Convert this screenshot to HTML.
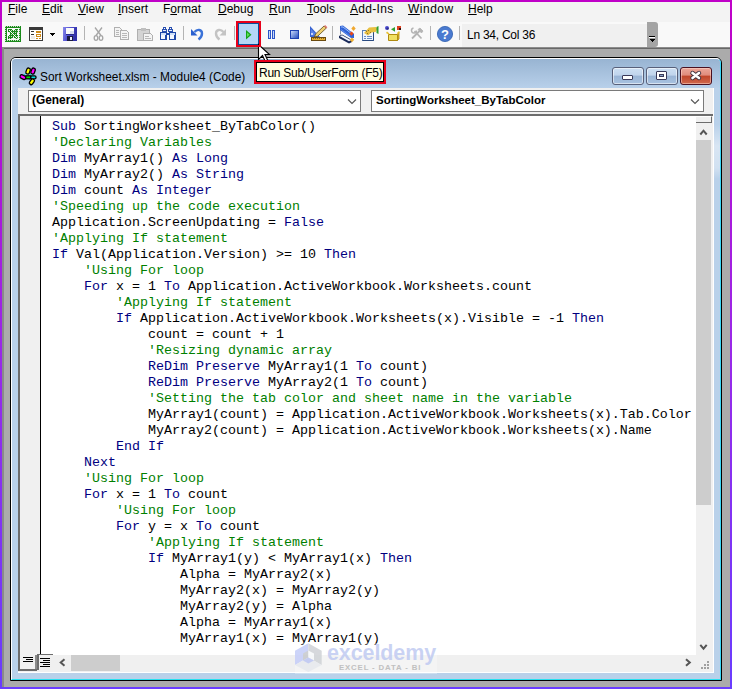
<!DOCTYPE html>
<html><head><meta charset="utf-8">
<style>
*{margin:0;padding:0;box-sizing:border-box}
html,body{width:732px;height:689px;overflow:hidden}
body{position:relative;background:#ababab;font-family:"Liberation Sans",sans-serif;}
.a{position:absolute}
#bord{left:0;top:0;width:732px;height:689px;border:2px solid transparent;border-image:linear-gradient(#c000c8,#9a28e8 50%,#6a3cff) 1;z-index:50}
#menu{left:2px;top:2px;width:728px;height:20px;background:#f3f3f3}
#tool{left:2px;top:22px;width:728px;height:25px;background:#f9f9f9}
.mi{position:absolute;top:2px;font-size:12px;color:#000;white-space:nowrap;line-height:14px}
.mi u{text-decoration:underline;text-underline-offset:1px}
#code{font-family:"Liberation Mono",monospace;font-size:13.333px;line-height:16px;color:#000;white-space:pre}
.k{color:#00007f}.c{color:#008000}
</style></head><body>
<div id="bord" class="a"></div>
<!-- menu -->
<div id="menu" class="a"></div>
<div class="mi" style="left:8px"><u>F</u>ile</div>
<div class="mi" style="left:42px"><u>E</u>dit</div>
<div class="mi" style="left:78px"><u>V</u>iew</div>
<div class="mi" style="left:118px"><u>I</u>nsert</div>
<div class="mi" style="left:163px">F<u>o</u>rmat</div>
<div class="mi" style="left:218px"><u>D</u>ebug</div>
<div class="mi" style="left:269px"><u>R</u>un</div>
<div class="mi" style="left:307px"><u>T</u>ools</div>
<div class="mi" style="left:350px;letter-spacing:0.3px"><u>A</u>dd-Ins</div>
<div class="mi" style="left:408px;letter-spacing:0.5px"><u>W</u>indow</div>
<div class="mi" style="left:468px"><u>H</u>elp</div>
<!-- toolbar -->
<div id="tool" class="a"></div>
<div class="a" style="left:2px;top:47px;width:728px;height:1px;background:#8c8c8c"></div>
<div class="a" style="left:2px;top:48px;width:728px;height:1px;background:#686868"></div>
<div class="a" style="left:2px;top:47px;width:2px;height:640px;background:#8a8a8a"></div>
<!-- window frame -->
<div class="a" style="left:10px;top:57px;width:712px;height:624px;background:#b9d1ea;border:1px solid #000;border-radius:6px 6px 0 0"></div>
<div class="a" style="left:11px;top:58px;width:710px;height:622px;border-left:1px solid #fff;border-top:1px solid #fff;border-right:1px solid #3ad8f8;border-bottom:1px solid #28e0f0;border-radius:5px 5px 0 0"></div>
<div class="a" style="left:12px;top:59px;width:708px;height:29px;background:linear-gradient(#98b4d2,#b8d0ea);border-radius:4px 4px 0 0"></div>
<div class="a" style="left:714px;top:124px;width:6px;height:55px;background:linear-gradient(rgba(255,255,255,0),rgba(255,255,255,.45) 40%,rgba(255,255,255,.35) 80%,rgba(255,255,255,0))"></div>
<!-- client -->
<div class="a" style="left:18px;top:88px;width:696px;height:585px;background:#f0f0f0;border-right:1px solid #fff;border-bottom:1px solid #fff"></div>
<div class="a" style="left:28px;top:90px;width:333px;height:22px;background:#fff;border:1px solid #7a7a7a"></div>
<div class="a" style="left:371px;top:90px;width:333px;height:22px;background:#fff;border:1px solid #7a7a7a"></div>
<div class="a" style="left:18px;top:114px;width:695px;height:2px;background:#6d6d6d"></div>
<div class="a" style="left:18px;top:114px;width:2px;height:557px;background:#6d6d6d"></div>
<div class="a" style="left:40px;top:116px;width:1px;height:539px;background:#000"></div>
<div class="a" style="left:41px;top:116px;width:655px;height:539px;background:#fff;overflow:hidden">
<pre id="code" class="a" style="left:11px;top:3px">
<span class="k">Sub</span> SortingWorksheet_ByTabColor()
<span class="c">'Declaring Variables</span>
<span class="k">Dim</span> MyArray1() <span class="k">As Long</span>
<span class="k">Dim</span> MyArray2() <span class="k">As String</span>
<span class="k">Dim</span> count <span class="k">As Integer</span>
<span class="c">'Speeding up the code execution</span>
Application.ScreenUpdating = <span class="k">False</span>
<span class="c">'Applying If statement</span>
<span class="k">If</span> Val(Application.Version) &gt;= 10 <span class="k">Then</span>
    <span class="c">'Using For loop</span>
    <span class="k">For</span> x = 1 <span class="k">To</span> Application.ActiveWorkbook.Worksheets.count
        <span class="c">'Applying If statement</span>
        <span class="k">If</span> Application.ActiveWorkbook.Worksheets(x).Visible = -1 <span class="k">Then</span>
            count = count + 1
            <span class="c">'Resizing dynamic array</span>
            <span class="k">ReDim Preserve</span> MyArray1(1 <span class="k">To</span> count)
            <span class="k">ReDim Preserve</span> MyArray2(1 <span class="k">To</span> count)
            <span class="c">'Setting the tab color and sheet name in the variable</span>
            MyArray1(count) = Application.ActiveWorkbook.Worksheets(x).Tab.Color
            MyArray2(count) = Application.ActiveWorkbook.Worksheets(x).Name
        <span class="k">End If</span>
    <span class="k">Next</span>
    <span class="c">'Using For loop</span>
    <span class="k">For</span> x = 1 <span class="k">To</span> count
        <span class="c">'Using For loop</span>
        <span class="k">For</span> y = x <span class="k">To</span> count
            <span class="c">'Applying If statement</span>
            <span class="k">If</span> MyArray1(y) &lt; MyArray1(x) <span class="k">Then</span>
                Alpha = MyArray2(x)
                MyArray2(x) = MyArray2(y)
                MyArray2(y) = Alpha
                Alpha = MyArray1(x)
                MyArray1(x) = MyArray1(y)
</pre>
</div>
<!-- vscroll -->
<div class="a" style="left:696px;top:116px;width:16px;height:7px;background:#f0f0f0;border-right:1px solid #6d6d6d;border-bottom:1px solid #6d6d6d;border-top:1px solid #fff"></div>
<div class="a" style="left:696px;top:140px;width:15px;height:365px;background:#cdcdcd"></div>
<!-- hscroll -->
<div class="a" style="left:71px;top:655px;width:49px;height:16px;background:#cdcdcd"></div>
<!-- status box -->
<div class="a" style="left:462px;top:24px;width:185px;height:23px;background:#f0f0f0;border-radius:0 0 3px 0"></div>
<div class="a" style="left:467px;top:28px;font-size:12px;letter-spacing:-0.25px;line-height:14px;color:#000;white-space:nowrap">Ln 34, Col 36</div>
<div class="a" style="left:647px;top:22px;width:11px;height:25px;background:#a4a4a4;border-radius:0 3px 3px 0"></div>
<svg class="a" style="left:0;top:0" width="732" height="689" viewBox="0 0 732 689">
 <defs>
  <pattern id="chk" width="2" height="2" patternUnits="userSpaceOnUse"><rect width="2" height="2" fill="#1a8a1a"/><rect x="1" y="0" width="1" height="1" fill="#c8e0c8"/></pattern>
 </defs>
 <!-- grip glyph -->
 <g shape-rendering="crispEdges" fill="#000">
  <rect x="649" y="36" width="6" height="1"/>
  <path d="M649 39h6l-3 3z"/>
 </g>
 <g fill="#fff" shape-rendering="crispEdges"><rect x="649" y="37" width="6" height="1"/></g>
 <!-- excel icon -->
 <g shape-rendering="crispEdges">
  <rect x="5" y="26" width="16" height="16" fill="url(#chk)"/>
  <rect x="7" y="28" width="12" height="12" fill="#f9f9f9"/>
  <path d="M8 29h3l7 7v3h-3l-7-7z" fill="url(#chk)"/>
  <path d="M15 29h3v3l-7 7h-3v-3z" fill="url(#chk)"/>
  <path d="M9 30l8 8" stroke="#fff" stroke-width="1" fill="none"/>
 </g>
 <!-- userform icon -->
 <g shape-rendering="crispEdges">
  <rect x="29" y="27" width="14" height="14" fill="#3a3a3a"/>
  <rect x="30" y="30" width="12" height="10" fill="#fff"/>
  <rect x="31" y="31" width="3" height="1" fill="#333"/>
  <rect x="31" y="34" width="3" height="1" fill="#333"/>
  <rect x="31" y="36" width="4" height="3" fill="#ececec"/>
  <rect x="36" y="31" width="5" height="2" fill="#d08a18"/>
  <rect x="36" y="34" width="5" height="3" fill="#d08a18"/>
  <rect x="37" y="35" width="3" height="1" fill="#fff"/>
  <rect x="36" y="38" width="2" height="1" fill="#d08a18"/>
  <rect x="39" y="38" width="2" height="1" fill="#d08a18"/>
  <path d="M49.5 33h6l-3 3.2z" fill="#000"/>
 </g>
 <!-- save -->
 <defs><linearGradient id="savg" x1="0" y1="0" x2="1" y2="0.3"><stop offset="0" stop-color="#8a8aec"/><stop offset="0.5" stop-color="#5050d0"/><stop offset="1" stop-color="#3030a8"/></linearGradient></defs>
 <g shape-rendering="crispEdges">
  <rect x="63" y="27" width="14" height="14" fill="url(#savg)"/>
  <rect x="66" y="28" width="8" height="6" fill="#fafafa"/>
  <rect x="70" y="31" width="4" height="3" fill="#d8dcf0"/>
  <rect x="66" y="34" width="8" height="1" fill="#2a2a90"/>
  <rect x="67" y="36" width="6" height="5" fill="#1a1a40"/>
  <rect x="70" y="37" width="2" height="3" fill="#e8ecff"/>
 </g>
 <!-- separators -->
 <g fill="#b4b4b4" shape-rendering="crispEdges">
  <rect x="84" y="26" width="1" height="14"/>
  <rect x="183" y="26" width="1" height="14"/>
  <rect x="234" y="26" width="1" height="14"/>
  <rect x="332" y="26" width="1" height="14"/>
  <rect x="430" y="26" width="1" height="14"/>
  <rect x="459" y="26" width="1" height="14"/>
 </g>
 <!-- scissors -->
 <g fill="none" stroke="#a6a6a6" stroke-width="1.3">
  <path d="M95 27.5l6 8M102 27.5l-6 8"/>
  <ellipse cx="96" cy="38" rx="1.8" ry="2.3"/>
  <ellipse cx="101" cy="38" rx="1.8" ry="2.3"/>
 </g>
 <!-- copy -->
 <g shape-rendering="crispEdges">
  <path d="M114.5 27.5h5l2 2v7h-7z" fill="#f4f4f4" stroke="#b0b0b0"/>
  <path d="M120.5 30.5h6l2 2v7h-8z" fill="#f4f4f4" stroke="#b0b0b0"/>
  <g fill="#b8b8b8"><rect x="116" y="30" width="3" height="1"/><rect x="116" y="32" width="3" height="1"/><rect x="116" y="34" width="3" height="1"/>
  <rect x="122" y="33" width="5" height="1"/><rect x="122" y="35" width="5" height="1"/><rect x="122" y="37" width="5" height="1"/></g>
 </g>
 <!-- paste -->
 <g shape-rendering="crispEdges">
  <rect x="137.5" y="29.5" width="12" height="11" fill="#d4d4d4" stroke="#b0b0b0"/>
  <rect x="141" y="28" width="5" height="3" fill="#c0c0c0"/>
  <path d="M143.5 33.5h7l2 2v5h-9z" fill="#f4f4f4" stroke="#b0b0b0"/>
  <g fill="#b8b8b8"><rect x="145" y="36" width="4" height="1"/><rect x="145" y="38" width="6" height="1"/></g>
 </g>
 <!-- binoculars -->
 <g shape-rendering="crispEdges">
  <rect x="163" y="27" width="3" height="3" fill="#2a50b0"/><rect x="164" y="28" width="1" height="1" fill="#fff"/>
  <rect x="162" y="29" width="5" height="3" fill="#2a50b0"/><rect x="163" y="30" width="3" height="1" fill="#e8f0fc"/>
  <rect x="160" y="32" width="7" height="8" fill="#1e48a8"/><rect x="161" y="33" width="5" height="2" fill="#d0e0f8"/><rect x="161" y="35" width="4" height="4" fill="#f4f8ff"/>
  <rect x="169" y="27" width="3" height="3" fill="#2a50b0"/><rect x="170" y="28" width="1" height="1" fill="#fff"/>
  <rect x="168" y="29" width="5" height="3" fill="#2a50b0"/><rect x="169" y="30" width="3" height="1" fill="#e8f0fc"/>
  <rect x="169" y="32" width="7" height="8" fill="#1e48a8"/><rect x="170" y="33" width="5" height="2" fill="#d0e0f8"/><rect x="170" y="35" width="4" height="4" fill="#f4f8ff"/>
  <rect x="167" y="33" width="2" height="2" fill="#1e48a8"/>
 </g>
 <!-- undo / redo -->
 <g fill="none" stroke-width="2.4" stroke-linecap="butt">
  <path d="M194.5 32c2.5-3 7.5-3 7.5 1.5c0 2.5-1.5 4.5-3.5 6" stroke="#3a72d8"/>
  <path d="M223.5 32c-2.5-3-7.5-3-7.5 1.5c0 2.5 1.5 4.5 3.5 6" stroke="#c4c4c4"/>
 </g>
 <path d="M191 29v6.5h6.5z" fill="#2a60d0"/>
 <path d="M226 29v6.5h-6.5z" fill="#c4c4c4"/>
 <!-- run button -->
 <g shape-rendering="crispEdges">
  <rect x="236" y="21" width="25" height="26" fill="#e8001a"/>
  <rect x="238" y="23" width="21" height="22" fill="#0a4e9a"/>
  <rect x="239" y="24" width="19" height="20" fill="#b4d6f6"/>
 </g>
 <path d="M246 30v9.5l5.5-4.75z" fill="#17a317"/>
 <path d="M247 32.5v4.5l2.6-2.25z" fill="#5ce05c"/>
 <!-- pause -->
 <defs>
  <linearGradient id="stopg" x1="0" y1="0" x2="1" y2="1"><stop offset="0" stop-color="#c8d8f8"/><stop offset="1" stop-color="#2a50c0"/></linearGradient>
 </defs>
 <g shape-rendering="crispEdges">
  <rect x="268" y="30" width="3" height="9" fill="#2b55c8"/><rect x="269" y="31" width="1" height="7" fill="#c8d8f8"/>
  <rect x="272" y="30" width="3" height="9" fill="#2b55c8"/><rect x="273" y="31" width="1" height="7" fill="#c8d8f8"/>
  <rect x="290" y="30" width="9" height="9" fill="#1e40b0"/><rect x="291" y="31" width="7" height="7" fill="url(#stopg)"/>
 </g>
 <!-- design mode -->
 <path d="M310 26v11h10z" fill="#3a64d0"/>
 <path d="M311 29v6.5h6z" fill="#5a84e8"/>
 <circle cx="312" cy="34" r="0.9" fill="#fff"/>
 <path d="M314.5 37l1-3l8.5-8l2.2 2.2l-8.5 8z" fill="#f0d070" stroke="#5a4a20" stroke-width="0.8"/>
 <path d="M324 26l1.2-1l2.2 2.2l-1 1.2z" fill="#e07a70"/>
 <g shape-rendering="crispEdges"><rect x="311" y="37" width="15" height="4" fill="#6a4a10"/><rect x="312" y="38" width="13" height="2" fill="#e8b030"/>
 <rect x="313" y="38" width="1" height="1" fill="#8a6a20"/><rect x="315" y="38" width="1" height="1" fill="#8a6a20"/><rect x="317" y="38" width="1" height="1" fill="#8a6a20"/><rect x="319" y="38" width="1" height="1" fill="#8a6a20"/><rect x="321" y="38" width="1" height="1" fill="#8a6a20"/><rect x="323" y="38" width="1" height="1" fill="#8a6a20"/></g>
 <!-- project explorer -->
 <g>
  <path d="M339 36l3-1.5l10 5.5v2l-3 1.5l-10-5.5z" fill="#1a2a5a"/>
  <path d="M340 36.2l2-1l9 5l-2 1z" fill="#f4f8ff"/>
  <path d="M340.5 27.5v7" stroke="#8090a8" stroke-width="1"/>
  <path d="M340 26l3-0.5l11 8.5v4l-3 0l-11-8z" fill="#2f62d8"/>
  <path d="M341 27l2 0l9 7" stroke="#a8c8f8" stroke-width="0.9" fill="none"/>
  <path d="M341 29.5l9 6.5" stroke="#6a98f0" stroke-width="0.8" fill="none"/>
  <path d="M353.5 26l2.2 2.5l-2.2 2.6l-2.2-2.6z" fill="#f0a830"/>
  <path d="M351.5 31.5l2.2 2l-2.2 2.2l-2.2-2.2z" fill="#e84818"/>
  <path d="M352 37.5l2.2 2.3l-2.2 2.4l-2.2-2.4z" fill="#f0b030"/>
 </g>
 <!-- properties -->
 <g>
  <rect x="362.5" y="30.5" width="11" height="10" fill="#f0f6fe" stroke="#5a80b8"/>
  <path d="M373.5 31v9.5h-11" stroke="#2a4a80" fill="none"/>
  <g fill="#6a8cc0" shape-rendering="crispEdges"><rect x="364" y="36" width="2" height="1"/><rect x="367" y="36" width="5" height="1"/><rect x="364" y="38" width="2" height="1"/><rect x="367" y="38" width="5" height="1"/></g>
  <path d="M364 33l5-5.5l7-0.5l1.5 2l-2 3l-4 0.5l-3.5 3z" fill="#e8c040"/>
  <path d="M366 31l1 1M368 30l1 1M370 32l1 1M367 33l1 1" stroke="#7a6020" stroke-width="0.8"/>
  <path d="M376.5 27l2-1v8l-2-1z" fill="#30a030"/>
 </g>
 <!-- object browser -->
 <g>
  <circle cx="387" cy="28" r="2" fill="#4a4ad0"/>
  <circle cx="387.6" cy="28.6" r="1.2" fill="#101040" opacity=".5"/>
  <path d="M391 29.3l4-2.4v4.8z" fill="#30a030"/>
  <rect x="397" y="26" width="4" height="4" fill="#e04020"/>
  <rect x="399" y="28" width="2" height="2" fill="#301010"/>
  <path d="M388.5 34.5h9v6h-9z" fill="#f0e060" stroke="#b08a10" stroke-width="1"/>
  <path d="M397.5 34.5l1.5-1.5v6l-1.5 1.5z" fill="#d8b020" stroke="#b08a10" stroke-width="0.8"/>
  <path d="M388.5 34.5l-2.5-1.5l1-1.5l2.5 2z" fill="#e8c030"/>
  <path d="M397.5 34.5l2.5-2l-1-1.5l-2 2z" fill="#e8c030"/>
 </g>
 <!-- tools -->
 <g fill="none" stroke="#b4b4b4" stroke-width="1.8">
  <path d="M412 38.5l8-8M414.5 31l7 7.5"/>
  <path d="M416.5 30.5a2.5 2.5 0 1 1 -3 -2.5" stroke-width="1.5"/>
  <path d="M418 29.5l2-1.5l3 3l-1.5 2z" fill="#b4b4b4" stroke-width="0.8"/>
 </g>
 <!-- help -->
 <circle cx="445" cy="34" r="7.6" fill="#4a7ad0" stroke="#2f5fb0" stroke-width="0.8"/>
 <text x="445" y="38.5" text-anchor="middle" font-family="Liberation Sans" font-weight="bold" font-size="13" fill="#fff">?</text>
</svg>

<!-- title -->
<svg class="a" style="left:0;top:0" width="732" height="689" viewBox="0 0 732 689">
 <g fill="#00e0e0" shape-rendering="crispEdges">
  <rect x="23" y="75" width="1" height="1"/><rect x="24" y="74" width="1" height="1"/><rect x="25" y="73" width="1" height="1"/><rect x="26" y="72" width="1" height="1"/>
  <rect x="29" y="73" width="1" height="1"/><rect x="30" y="74" width="1" height="1"/><rect x="31" y="75" width="1" height="1"/><rect x="32" y="74" width="1" height="1"/><rect x="33" y="73" width="1" height="1"/>
  <rect x="29" y="79" width="1" height="1"/><rect x="30" y="80" width="1" height="1"/><rect x="28" y="78" width="1" height="1"/>
 </g>
 <g stroke="#000" stroke-width="1.3">
  <rect x="26.3" y="68" width="3.6" height="6" rx="1.6" fill="#ffff00" transform="rotate(20 28 71)"/>
  <rect x="31.3" y="68" width="3.6" height="6" rx="1.6" fill="#ff00ff" transform="rotate(20 33 71)"/>
  <rect x="20" y="75.3" width="6" height="3.6" rx="1.6" fill="#ff00ff" transform="rotate(25 23 77)"/>
  <rect x="25.8" y="75.8" width="5" height="3" fill="#00e000"/>
  <rect x="30.8" y="75.8" width="5.2" height="3" rx="1.2" fill="#00e0e0"/>
  <rect x="30.3" y="78.8" width="3.6" height="6" rx="1.6" fill="#ffff00" transform="rotate(35 32 81.5)"/>
 </g>
</svg>
<div class="a" style="left:40px;top:70px;font-size:11.9px;line-height:14px;color:#000;white-space:nowrap">Sort Worksheet.xlsm - Module4 (Code)</div>
<!-- caption buttons -->
<div class="a" style="left:612px;top:67px;width:32px;height:18px;border:1px solid #58607a;border-radius:3px;background:linear-gradient(#cddff3 0,#c0d4ec 45%,#9ab5d6 50%,#a8c2e0 100%);box-shadow:inset 0 0 0 1px rgba(255,255,255,.55)"></div>
<div class="a" style="left:646px;top:67px;width:32px;height:18px;border:1px solid #58607a;border-radius:3px;background:linear-gradient(#cddff3 0,#c0d4ec 45%,#9ab5d6 50%,#a8c2e0 100%);box-shadow:inset 0 0 0 1px rgba(255,255,255,.55)"></div>
<div class="a" style="left:680px;top:67px;width:32px;height:18px;border:1px solid #4a1020;border-radius:3px;background:linear-gradient(#eba79a 0,#e08c7c 45%,#c0452a 50%,#d0684c 100%);box-shadow:inset 0 0 0 1px rgba(255,220,210,.5)"></div>
<div class="a" style="left:622px;top:75px;width:11px;height:5px;background:#fff;border:1px solid #3a3a5a;border-radius:1px"></div>
<div class="a" style="left:656px;top:71px;width:11px;height:9px;background:#fff;border:1px solid #3a3a5a;border-radius:1px"></div>
<div class="a" style="left:659px;top:74px;width:5px;height:3px;background:#8ca4c8;border:1px solid #3a3a5a"></div>
<svg class="a" style="left:688px;top:69px" width="16" height="13" viewBox="0 0 16 13">
 <path d="M4.5 4l6.5 5M11 4l-6.5 5" stroke="#40303c" stroke-width="4.4" fill="none" stroke-linecap="round"/>
 <path d="M4.5 4l6.5 5M11 4l-6.5 5" stroke="#fff" stroke-width="2.6" fill="none" stroke-linecap="round"/>
</svg>
<!-- combo text -->
<div class="a" style="left:32px;top:93px;font-size:11.9px;font-weight:bold;line-height:14px;white-space:nowrap">(General)</div>
<div class="a" style="left:376px;top:93px;font-size:11.5px;font-weight:bold;line-height:14px;white-space:nowrap">SortingWorksheet_ByTabColor</div>
<svg class="a" style="left:0;top:0" width="732" height="689" viewBox="0 0 732 689">
 <path d="M348 99.5l4 4l4-4" stroke="#555" stroke-width="1.1" fill="none"/>
 <path d="M691 99.5l4 4l4-4" stroke="#555" stroke-width="1.1" fill="none"/>
 <!-- scroll arrows -->
 <path d="M700.3 134.5l3.2-3.8l3.2 3.8" stroke="#555" stroke-width="2" fill="none"/>
 <path d="M700.3 644.8l3.2 3.8l3.2-3.8" stroke="#555" stroke-width="2" fill="none"/>
 <path d="M64.5 659.2l-3.8 3.3l3.8 3.3" stroke="#555" stroke-width="2" fill="none"/>
 <path d="M686 659.2l3.8 3.3l-3.8 3.3" stroke="#555" stroke-width="2" fill="none"/>
 <g fill="#a0a0a0" shape-rendering="crispEdges">
  <rect x="707" y="661" width="2" height="2"/><rect x="704" y="664" width="2" height="2"/><rect x="707" y="664" width="2" height="2"/>
  <rect x="701" y="667" width="2" height="2"/><rect x="704" y="667" width="2" height="2"/><rect x="707" y="667" width="2" height="2"/>
 </g>
 <!-- view buttons -->
 <g shape-rendering="crispEdges">
  <rect x="20" y="654" width="16" height="15" fill="#f0f0f0"/>
  <rect x="18" y="669" width="19" height="2" fill="#6d6d6d"/>
  <rect x="35" y="655" width="2" height="14" fill="#8a8a8a"/>
  <rect x="23" y="657" width="10" height="1" fill="#000"/>
  <rect x="26" y="659" width="7" height="1" fill="#000"/>
  <rect x="23" y="661" width="10" height="1" fill="#000"/>
  <rect x="37" y="654" width="16" height="1" fill="#6d6d6d"/>
  <rect x="37" y="654" width="2" height="16" fill="#6d6d6d"/>
  <rect x="39" y="655" width="14" height="15" fill="#f0f0f0"/>
  <rect x="40" y="658" width="10" height="1" fill="#000"/>
  <rect x="43" y="660" width="7" height="1" fill="#000"/>
  <rect x="40" y="662" width="10" height="1" fill="#000"/>
  <rect x="43" y="664" width="7" height="1" fill="#000"/>
  <rect x="40" y="666" width="10" height="1" fill="#000"/>
 </g>
</svg>
<!-- cursor -->
<svg class="a" style="left:257px;top:43px" width="16" height="22" viewBox="0 0 16 22">
 <path d="M1.5 1.5v15l4-4l3 6.5l2.5-1l-3-6.5h4.5z" fill="#fff" stroke="#000" stroke-width="1.1" stroke-linejoin="miter"/>
</svg>
<div class="a" style="left:236px;top:21px;width:25px;height:26px;border:2px solid #e8001a"></div>
<!-- red box around tooltip -->
<div class="a" style="left:254px;top:60px;width:132px;height:24px;border:2px solid #e8001a;background:#000"></div>
<div class="a" style="left:257px;top:63px;width:126px;height:18px;background:#ffffe1"></div>
<div class="a" style="left:259px;top:66px;font-size:12px;letter-spacing:-0.25px;line-height:14px;color:#000;white-space:nowrap">Run Sub/UserForm (F5)</div>

<!-- watermark -->
<svg class="a" style="left:0;top:0" width="732" height="689" viewBox="0 0 732 689">
 <rect x="295" y="643" width="142" height="31" fill="#fff" fill-opacity="0.3"/>
 <g opacity="0.85">
  <path d="M308.3 643.2L295 650.7V665L308.3 657.5z" fill="#c4cdf8"/>
  <path d="M308.3 643.2L321.7 650.7V665L308.3 657.5z" fill="#cfd2d6"/>
  <path d="M295 665L308.3 657.5L321.7 665L308.3 672z" fill="#e6e9ee"/>
  <path d="M303 653.5L308.3 650.5V657.5L303 660.5z" fill="#c6c8cc"/>
  <path d="M308.3 650.5L314 653.5V660.5L308.3 657.5z" fill="#f6f8fa"/>
  <path d="M303 660.5L308.3 657.5L314 660.5L308.3 663.5z" fill="#bcc6f2"/>
 </g>
 <text x="327" y="660" font-family="Liberation Sans" font-weight="bold" font-size="21.5" fill="#b8c4f0" fill-opacity="0.75" letter-spacing="-0.1">exceldemy</text>
 <text x="339" y="670" font-family="Liberation Sans" font-weight="bold" font-size="7.8" fill="#c0c0c0" letter-spacing="0.85">EXCEL - DATA - BI</text>
</svg>

<!--OVERLAY-->
</body></html>
